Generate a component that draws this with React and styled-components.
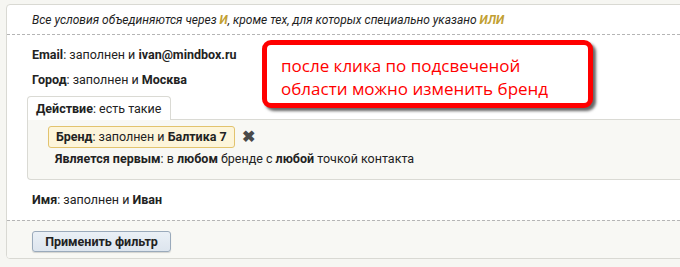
import styled, { createGlobalStyle } from "styled-components"

const GlobalStyle = createGlobalStyle`
    body {
        margin: 0;
        background: #f6f6f2;
        overflow: hidden;
        font-family: Roboto, "Liberation Sans", sans-serif;
        color: #222;
    }
`

const Page = styled.div`
    position: relative;
    width: 680px;
    height: 267px;
    padding: 4px 0 0 6px;
    box-sizing: border-box;
`

const Panel = styled.div`
    width: 700px;
    height: 255px;
    box-sizing: border-box;
    border: 1px solid #d9d9d3;
    border-radius: 4px;
    background: #fff;
    display: flex;
    flex-direction: column;
    overflow: hidden;

    & > * {
        flex-shrink: 0;
    }
`

const Hint = styled.div`
    height: 29px;
    padding-left: 25px;
    display: flex;
    align-items: center;
    font-size: 12px;
    font-style: italic;
    color: #1e1e1e;
    border-bottom: 1px dashed #b5b5b5;
`

const Op = styled.b`
    color: #c2a032;
`

const Conditions = styled.div`
    padding: 6.5px 0 0 25px;
    display: flex;
    flex-direction: column;
    flex: 1;
`

const Row = styled.div`
    font-size: 12.5px;
    height: 25px;
    line-height: 25px;
    flex-shrink: 0;
`

const Action = styled.div`
    margin: 4.5px 0 6.5px -5px;
    display: flex;
    flex-direction: column;
    align-items: flex-start;
`

const Tab = styled.div`
    height: 24px;
    box-sizing: border-box;
    padding: 0 9px 0 8px;
    line-height: 24px;
    font-size: 12.5px;
    white-space: nowrap;
    background: #fff;
    border: 1px solid #dadad4;
    border-bottom: none;
    border-radius: 4px 4px 0 0;
    position: relative;
    z-index: 1;
    margin-bottom: -1px;
`

const ActionBody = styled.div`
    align-self: stretch;
    background: #f8f8f4;
    border: 1px solid #dadad4;
    border-right: none;
    border-radius: 0 0 0 4px;
    padding: 6px 0 0 20px;
    height: 61px;
    box-sizing: border-box;
`

const ChipLine = styled.div`
    display: flex;
    align-items: center;
    gap: 7px;
`

const Chip = styled.span`
    display: inline-block;
    height: 22px;
    line-height: 20px;
    box-sizing: border-box;
    padding: 0 7px;
    font-size: 12.5px;
    background: #fdf5da;
    border: 1px solid #e2c36e;
    border-radius: 3px;
`

const Remove = styled.span`
    font-size: 16px;
    font-weight: bold;
    color: #4a4a4a;
    line-height: 1;
`

const SubRow = styled.div`
    font-size: 12.5px;
    line-height: 16px;
    padding: 3px 0 0 7px;
`

const Footer = styled.div`
    height: 38px;
    border-top: 1px dashed #b5b5b5;
    background: #f8f8f4;
    padding: 10px 0 0 25px;
    box-sizing: border-box;
`

const Button = styled.button`
    display: block;
    width: 139px;
    height: 21px;
    padding: 0;
    font-family: Roboto, "Liberation Sans", sans-serif;
    font-size: 12.5px;
    font-weight: bold;
    color: #222;
    background: linear-gradient(#eaf0f6, #dde5ee);
    border: 1px solid #9aaabb;
    border-radius: 3px;
    box-shadow: 0 1px 1px rgba(0, 0, 0, 0.15);
`

const Callout = styled.div`
    position: absolute;
    left: 262px;
    top: 40px;
    width: 331px;
    height: 68px;
    box-sizing: border-box;
    border: 5px solid #ff0000;
    border-radius: 9px;
    background: #fff;
    box-shadow: 3px 3px 3px rgba(0, 0, 0, 0.6);
    padding: 9px 0 0 14px;
    font-family: "Open Sans", sans-serif;
    font-size: 17px;
    line-height: 23px;
    color: #ff0000;
`

export default function App() {
    return (
        <>
            <GlobalStyle />
            <Page>
                <Panel>
                    <Hint>
                        <span>
                            Все условия объединяются через <Op>И</Op>, кроме тех, для которых специально указано <Op>ИЛИ</Op>
                        </span>
                    </Hint>
                    <Conditions>
                        <Row><b>Email</b>: заполнен и <b>ivan@mindbox.ru</b></Row>
                        <Row><b>Город</b>: заполнен и <b>Москва</b></Row>
                        <Action>
                            <Tab><b>Действие</b>: есть такие</Tab>
                            <ActionBody>
                                <ChipLine>
                                    <Chip><b>Бренд</b>: заполнен и <b>Балтика 7</b></Chip>
                                    <Remove>✖</Remove>
                                </ChipLine>
                                <SubRow>
                                    <b>Является первым</b>: в <b>любом</b> бренде с <b>любой</b> точкой контакта
                                </SubRow>
                            </ActionBody>
                        </Action>
                        <Row><b>Имя</b>: заполнен и <b>Иван</b></Row>
                    </Conditions>
                    <Footer>
                        <Button>Применить фильтр</Button>
                    </Footer>
                </Panel>
                <Callout>
                    после клика по подсвеченой<br />
                    области можно изменить бренд
                </Callout>
            </Page>
        </>
    )
}
